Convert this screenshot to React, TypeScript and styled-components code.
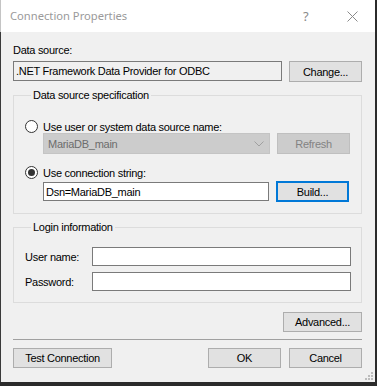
import React from "react";
import styled, { createGlobalStyle } from "styled-components";

const Global = createGlobalStyle`
  html, body { margin: 0; padding: 0; background: #2b2b2b; }
  body { font-family: "Liberation Sans", Arial, sans-serif; font-size: 11px; letter-spacing: -0.28px; color: #000; }
  * { box-sizing: border-box; }
`;

const Window = styled.div`
  position: relative;
  width: 375px;
  height: 382px;
  display: flex;
  flex-direction: column;
  background: #f0f0f0;
`;

const TitleBar = styled.div`
  height: 32px;
  flex: none;
  display: flex;
  align-items: center;
  background: #ffffff;
  border-left: 1px solid #c4c4c4;
  padding-left: 9px;
`;

const Title = styled.div`
  flex: 1;
  font-family: "Noto Sans", "Open Sans", sans-serif;
  font-size: 11.2px;
  letter-spacing: 0;
  color: #9a9a9a;
  line-height: 16px;
`;

const HelpGlyph = styled.div`
  width: 12px;
  margin-right: 32px;
  font-family: "Noto Sans", sans-serif;
  font-size: 13px;
  letter-spacing: 0;
  color: #8a8a8a;
  line-height: 16px;
`;

const CloseIcon = styled.svg`
  width: 11px;
  height: 11px;
  margin-right: 17px;
  display: block;
`;

const Body = styled.div`
  flex: 1;
  display: flex;
  flex-direction: column;
  border-left: 1px solid #3a3a3a;
  padding: 12px 13px 0 12px;
`;

const Label = styled.div`
  line-height: 13px;
  height: 13px;
  white-space: nowrap;
`;

const Row = styled.div<{ $mt?: number; $gap?: number }>`
  display: flex;
  align-items: flex-start;
  margin-top: ${(p) => p.$mt ?? 0}px;
  gap: ${(p) => p.$gap ?? 7}px;
`;

const TextBox = styled.div<{ $w?: number; $h?: number; $bg?: string; $mt?: number }>`
  width: ${(p) => (p.$w ? `${p.$w}px` : "auto")};
  flex: ${(p) => (p.$w ? "none" : "1")};
  height: ${(p) => p.$h ?? 20}px;
  margin-top: ${(p) => p.$mt ?? 0}px;
  border: 1px solid #7a7a7a;
  background: ${(p) => p.$bg ?? "#ffffff"};
  padding-left: 2px;
  display: flex;
  align-items: center;
  white-space: nowrap;
  overflow: hidden;
`;

const Button = styled.div<{ $w: number; $h?: number; $disabled?: boolean; $focused?: boolean }>`
  width: ${(p) => p.$w}px;
  height: ${(p) => p.$h ?? 21}px;
  flex: none;
  display: flex;
  align-items: center;
  justify-content: center;
  background: ${(p) => (p.$disabled ? "#cccccc" : "#e1e1e1")};
  border: ${(p) =>
    p.$focused ? "2px solid #0078d7" : p.$disabled ? "1px solid #bfbfbf" : "1px solid #adadad"};
  color: ${(p) => (p.$disabled ? "#838383" : "#000")};
  white-space: nowrap;
`;

const Group = styled.fieldset<{ $mt: number; $pb: number; $pr: number }>`
  margin: ${(p) => p.$mt}px 0 0 0;
  border: 1px solid #dcdcdc;
  padding: 0 ${(p) => p.$pr}px ${(p) => p.$pb}px 11px;
  min-width: 0;
  display: flex;
  flex-direction: column;
`;

const Legend = styled.legend`
  margin-left: 6px;
  padding: 0 2px;
  line-height: 13px;
  height: 13px;
  white-space: nowrap;
`;

const RadioRow = styled.div<{ $mt: number }>`
  display: flex;
  align-items: center;
  height: 13px;
  margin-top: ${(p) => p.$mt}px;
  gap: 5px;
  white-space: nowrap;
`;

const Radio = styled.div<{ $checked?: boolean }>`
  width: 13px;
  height: 13px;
  flex: none;
  border-radius: 50%;
  border: 1px solid #333333;
  background: #ffffff;
  display: flex;
  align-items: center;
  justify-content: center;
  &::after {
    content: "";
    display: ${(p) => (p.$checked ? "block" : "none")};
    width: 7px;
    height: 7px;
    border-radius: 50%;
    background: #333333;
  }
`;

const Indented = styled.div<{ $mt: number }>`
  display: flex;
  align-items: flex-start;
  gap: 7px;
  margin-top: ${(p) => p.$mt}px;
  padding-left: 18px;
`;

const Combo = styled.div`
  width: 227px;
  height: 21px;
  flex: none;
  background: #cccccc;
  border: 1px solid #c4c4c4;
  color: #6d6d6d;
  display: flex;
  align-items: center;
  padding-left: 4px;
  padding-right: 5px;
`;

const ComboText = styled.div`
  flex: 1;
`;

const Chevron = styled.svg`
  width: 10px;
  height: 6px;
  display: block;
`;

const FieldRow = styled.div<{ $mt: number }>`
  display: flex;
  align-items: center;
  margin-top: ${(p) => p.$mt}px;
  height: 19px;
`;

const FieldLabel = styled.div`
  width: 67px;
  flex: none;
  white-space: nowrap;
`;

const RightRow = styled.div<{ $mt: number }>`
  display: flex;
  justify-content: flex-end;
  margin-top: ${(p) => p.$mt}px;
`;

const Separator = styled.div`
  height: 1px;
  background: #a0a0a0;
  margin-top: 7px;
`;

const Footer = styled.div`
  display: flex;
  margin-top: 8px;
  gap: 8px;
`;

const Spacer = styled.div`
  flex: 1;
`;

const Grip = styled.svg`
  position: absolute;
  right: 2px;
  bottom: 2px;
  width: 9px;
  height: 9px;
`;

export default function App() {
  return (
    <>
      <Global />
      <Window>
        <TitleBar>
          <Title>Connection Properties</Title>
          <HelpGlyph>?</HelpGlyph>
          <CloseIcon viewBox="0 0 11 11">
            <path d="M0.5 0.5 L10.5 10.5 M10.5 0.5 L0.5 10.5" stroke="#8a8a8a" strokeWidth="1" fill="none" />
          </CloseIcon>
        </TitleBar>
        <Body>
          <Label>Data source:</Label>
          <Row $mt={4}>
            <TextBox $w={269} $bg="#f0f0f0">.NET Framework Data Provider for ODBC</TextBox>
            <Button $w={73}>Change...</Button>
          </Row>
          <Group $mt={7} $pb={11} $pr={11}>
            <Legend>Data source specification</Legend>
            <RadioRow $mt={18}>
              <Radio />
              <span>Use user or system data source name:</span>
            </RadioRow>
            <Indented $mt={0}>
              <Combo>
                <ComboText>MariaDB_main</ComboText>
                <Chevron viewBox="0 0 10 6">
                  <path d="M0.5 0.5 L5 5 L9.5 0.5" stroke="#a0a0a0" strokeWidth="1" fill="none" />
                </Chevron>
              </Combo>
              <Button $w={73} $disabled>Refresh</Button>
            </Indented>
            <RadioRow $mt={12}>
              <Radio $checked />
              <span>Use connection string:</span>
            </RadioRow>
            <Indented $mt={2}>
              <TextBox $w={226} $mt={1} $h={19}>Dsn=MariaDB_main</TextBox>
              <Button $w={73} $focused>Build...</Button>
            </Indented>
          </Group>
          <Group $mt={7} $pb={11} $pr={10}>
            <Legend>Login information</Legend>
            <FieldRow $mt={13}>
              <FieldLabel>User name:</FieldLabel>
              <TextBox $h={19} />
            </FieldRow>
            <FieldRow $mt={6}>
              <FieldLabel>Password:</FieldLabel>
              <TextBox $h={19} />
            </FieldRow>
          </Group>
          <RightRow $mt={9}>
            <Button $w={79} $h={20}>Advanced...</Button>
          </RightRow>
          <Separator />
          <Footer>
            <Button $w={99} $h={20}>Test Connection</Button>
            <Spacer />
            <Button $w={73} $h={20}>OK</Button>
            <Button $w={73} $h={20}>Cancel</Button>
          </Footer>
        </Body>
        <Grip viewBox="0 0 9 9">
          <rect x="7" y="1" width="2" height="2" fill="#bcbcbc" />
          <rect x="4" y="4" width="2" height="2" fill="#bcbcbc" />
          <rect x="7" y="4" width="2" height="2" fill="#bcbcbc" />
          <rect x="1" y="7" width="2" height="2" fill="#bcbcbc" />
          <rect x="4" y="7" width="2" height="2" fill="#bcbcbc" />
          <rect x="7" y="7" width="2" height="2" fill="#bcbcbc" />
        </Grip>
      </Window>
    </>
  );
}
